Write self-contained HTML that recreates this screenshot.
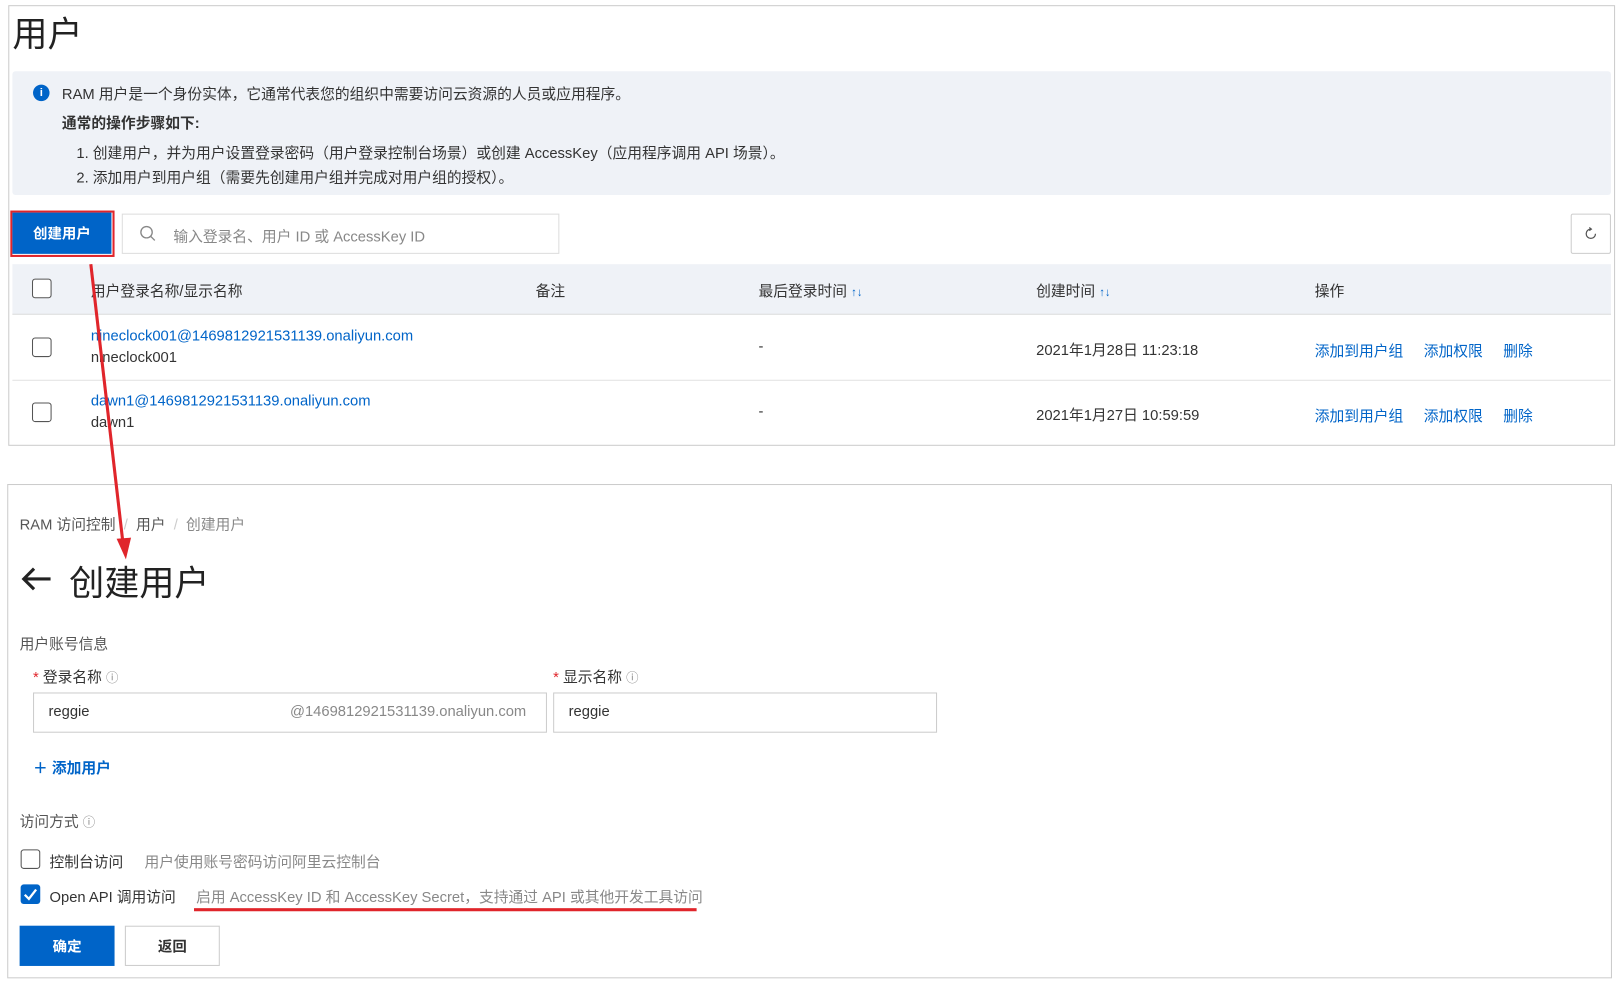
<!DOCTYPE html>
<html><head><meta charset="utf-8"><style>
*{box-sizing:border-box;margin:0;padding:0}
html,body{width:1619px;height:987px;overflow:hidden;background:#fff}
body{font-family:"Liberation Sans","Noto Sans CJK SC",sans-serif;color:#333;font-size:14.3px;position:relative}
#w{position:absolute;left:0;top:0;width:1569px;height:957px;transform:scale(1.032);transform-origin:0 0}
.a{position:absolute;white-space:nowrap}
.panel{position:absolute;border:1px solid #ccc;background:#fff}
.cb{position:absolute;width:19px;height:19px;border:1px solid #555;border-radius:3px;background:#fff}
.link{color:#0064c8}
.gray{color:#888}
.btn{position:absolute;display:flex;align-items:center;justify-content:center;font-weight:bold;font-size:14px}
</style></head><body><div id="w">
<div class="panel" style="left:8px;top:5px;width:1557px;height:427px"></div>
<div class="a" style="left:12px;top:6px;font-size:34px;color:#222">用户</div>
<div class="a" style="left:12px;top:69px;width:1549px;height:120px;background:#eff2f7;border-radius:3px"></div>
<div class="a" style="left:32px;top:82px;width:16px;height:16px;border-radius:50%;background:#0064c8;color:#fff;font-size:11px;font-weight:bold;text-align:center;line-height:16px">i</div>
<div class="a" style="left:60px;top:80px">RAM 用户是一个身份实体，它通常代表您的组织中需要访问云资源的人员或应用程序。</div>
<div class="a" style="left:60px;top:108px;font-weight:bold">通常的操作步骤如下:</div>
<div class="a" style="left:74px;top:137px">1. 创建用户，并为用户设置登录密码（用户登录控制台场景）或创建 AccessKey（应用程序调用 API 场景）。</div>
<div class="a" style="left:74px;top:161px">2. 添加用户到用户组（需要先创建用户组并完成对用户组的授权）。</div>
<div class="a" style="left:10px;top:204px;width:101px;height:45px;border:2px solid #e0252b"></div>
<div class="btn" style="left:12px;top:206px;width:96px;height:40px;background:#0064c8;color:#fff">创建用户</div>
<div class="a" style="left:118px;top:207px;width:424px;height:39px;border:1px solid #ddd"></div>
<svg class="a" style="left:135px;top:218px" width="17" height="17" viewBox="0 0 17 17"><circle cx="7" cy="7" r="5.5" fill="none" stroke="#888" stroke-width="1.3"/><path d="M11 11l4 4" stroke="#888" stroke-width="1.3"/></svg>
<div class="a gray" style="left:168px;top:218px">输入登录名、用户 ID 或 AccessKey ID</div>
<div class="a" style="left:1522px;top:207px;width:39px;height:39px;border:1px solid #ccc;border-radius:2px"></div>
<svg class="a" style="left:1535px;top:220px" width="13" height="13" viewBox="0 0 13 13"><path d="M6.5 2A4.5 4.5 0 1 0 11 6.5" fill="none" stroke="#555" stroke-width="1.2"/><path d="M5 0.5L7 2 5 3.5" fill="none" stroke="#555" stroke-width="1.2"/></svg>
<div class="a" style="left:12px;top:256px;width:1549px;height:49px;background:#eff2f7;border-bottom:1px solid #ddd"></div>
<div class="cb" style="left:31px;top:270px"></div>
<div class="a" style="left:88px;top:271px">用户登录名称/显示名称</div>
<div class="a" style="left:519px;top:271px">备注</div>
<div class="a" style="left:735px;top:271px">最后登录时间 <span style="color:#0064c8;font-size:11px">↑↓</span></div>
<div class="a" style="left:1004px;top:271px">创建时间 <span style="color:#0064c8;font-size:11px">↑↓</span></div>
<div class="a" style="left:1274px;top:271px">操作</div>
<div class="a" style="left:12px;top:368px;width:1549px;height:1px;background:#e3e3e3"></div>
<div class="cb" style="left:31px;top:327px"></div>
<div class="a link" style="left:88px;top:318px">nineclock001@1469812921531139.onaliyun.com</div>
<div class="a" style="left:88px;top:339px">nineclock001</div>
<div class="a" style="left:735px;top:328px">-</div>
<div class="a" style="left:1004px;top:328px">2021年1月28日 11:23:18</div>
<div class="a link" style="left:1274px;top:329px">添加到用户组&nbsp;&nbsp;&nbsp;&nbsp; 添加权限&nbsp;&nbsp;&nbsp;&nbsp; 删除</div>
<div class="cb" style="left:31px;top:390px"></div>
<div class="a link" style="left:88px;top:381px">dawn1@1469812921531139.onaliyun.com</div>
<div class="a" style="left:88px;top:402px">dawn1</div>
<div class="a" style="left:735px;top:391px">-</div>
<div class="a" style="left:1004px;top:391px">2021年1月27日 10:59:59</div>
<div class="a link" style="left:1274px;top:392px">添加到用户组&nbsp;&nbsp;&nbsp;&nbsp; 添加权限&nbsp;&nbsp;&nbsp;&nbsp; 删除</div>

<div class="panel" style="left:7px;top:469px;width:1555px;height:479px"></div>
<div class="a" style="left:19px;top:497px;color:#555">RAM 访问控制 <span style="color:#ccc">&nbsp;/&nbsp;</span> 用户 <span style="color:#ccc">&nbsp;/&nbsp;</span> <span class="gray">创建用户</span></div>
<svg class="a" style="left:19px;top:547px" width="32" height="28" viewBox="0 0 32 28"><path d="M30 14H4M14 4L4 14l10 10" fill="none" stroke="#222" stroke-width="3"/></svg>
<div class="a" style="left:67px;top:538px;font-size:34px;color:#222">创建用户</div>
<div class="a" style="left:19px;top:613px;color:#555">用户账号信息</div>
<div class="a" style="left:32px;top:645px"><span style="color:#e0252b">*</span> 登录名称 <span class="gray" style="font-size:12px">ⓘ</span></div>
<div class="a" style="left:536px;top:645px"><span style="color:#e0252b">*</span> 显示名称 <span class="gray" style="font-size:12px">ⓘ</span></div>
<div class="a" style="left:32px;top:671px;width:498px;height:39px;border:1px solid #ccc"></div>
<div class="a" style="left:47px;top:682px">reggie</div>
<div class="a gray" style="left:281px;top:682px">@1469812921531139.onaliyun.com</div>
<div class="a" style="left:536px;top:671px;width:372px;height:39px;border:1px solid #ccc"></div>
<div class="a" style="left:551px;top:682px">reggie</div>
<div class="a link" style="left:32px;top:733px;font-weight:bold">＋ 添加用户</div>
<div class="a" style="left:19px;top:785px;color:#555">访问方式 <span class="gray" style="font-size:12px">ⓘ</span></div>
<div class="cb" style="left:20px;top:823px"></div>
<div class="a" style="left:48px;top:824px">控制台访问</div>
<div class="a gray" style="left:140px;top:824px">用户使用账号密码访问阿里云控制台</div>
<div class="a" style="left:20px;top:857px;width:19px;height:19px;border-radius:3px;background:#0064c8"></div>
<svg class="a" style="left:20px;top:857px" width="19" height="19" viewBox="0 0 19 19"><path d="M4 10l4 4 7-9" fill="none" stroke="#fff" stroke-width="2.2"/></svg>
<div class="a" style="left:48px;top:858px">Open API 调用访问</div>
<div class="a gray" style="left:190px;top:858px">启用 AccessKey ID 和 AccessKey Secret，支持通过 API 或其他开发工具访问</div>
<div class="a" style="left:188px;top:880px;width:487px;height:3px;background:#e0252b"></div>
<div class="btn" style="left:19px;top:897px;width:92px;height:39px;background:#0064c8;color:#fff">确定</div>
<div class="btn" style="left:121px;top:897px;width:92px;height:39px;border:1px solid #ccc;color:#333">返回</div>

<svg class="a" style="left:0;top:0" width="1569" height="957"><line x1="88" y1="256" x2="119" y2="525" stroke="#e0252b" stroke-width="3"/><path d="M113 522L122 542 127 521Z" fill="#e0252b"/></svg>
</div></body></html>
